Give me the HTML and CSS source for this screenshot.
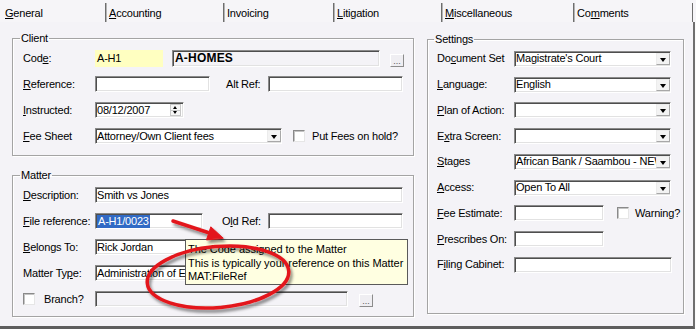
FILE: index.html
```html
<!DOCTYPE html>
<html>
<head>
<meta charset="utf-8" />
<title>Matter - General</title>
<link rel="stylesheet" href="styles.css">
</head>

<body>

<div class="tabs">
  <div class="tab active"><u>G</u>eneral</div>
  <div class="tab w-acc"><u>A</u>ccounting</div>
  <div class="tab w-inv">Invoicing</div>
  <div class="tab w-lit"><u>L</u>itigation</div>
  <div class="tab w-misc"><u>M</u>iscellaneous</div>
  <div class="tab w-com last">Co<u>m</u>ments</div>
</div>

<div class="panel">

  <div class="col-left">

    <fieldset class="group client">
      <legend>Client</legend>

      <div class="row">
        <span class="lbl">Cod<u>e</u>:</span>
        <span class="field yellow w-code">A-H1</span>
        <span class="field readonly bold w-name">A-HOMES</span>
        <span class="dots">...</span>
      </div>

      <div class="row">
        <span class="lbl"><u>R</u>eference:</span>
        <span class="field w-ref"></span>
        <span class="lbl2 alt">Alt Ref:</span>
        <span class="field w-alt"></span>
      </div>

      <div class="row">
        <span class="lbl"><u>I</u>nstructed:</span>
        <span class="field w-date">08/12/2007<span class="spin"><i class="up"></i><i class="dn"></i></span></span>
      </div>

      <div class="row">
        <span class="lbl"><u>F</u>ee Sheet</span>
        <span class="field select w-fee"><span class="val">Attorney/Own Client fees</span><span class="drop"></span></span>
        <span class="check hold"></span>
        <span class="check-text">Put Fees on hold?</span>
      </div>
    </fieldset>

    <fieldset class="group matter">
      <legend>Matter</legend>

      <div class="row">
        <span class="lbl"><u>D</u>escription:</span>
        <span class="field w-desc">Smith vs Jones</span>
      </div>

      <div class="row">
        <span class="lbl"><u>F</u>ile reference:</span>
        <span class="field w-file"><span class="sel">A-H1/0023</span></span>
        <span class="lbl2 old">O<u>l</u>d Ref:</span>
        <span class="field w-alt"></span>
      </div>

      <div class="row">
        <span class="lbl"><u>B</u>elongs To:</span>
        <span class="field w-belong">Rick Jordan</span>
      </div>

      <div class="row">
        <span class="lbl">Matter Ty<u>p</u>e:</span>
        <span class="field select w-belong"><span class="val">Administration of Estates</span><span class="drop"></span></span>
      </div>

      <div class="row">
        <span class="lbl"><span class="check"></span><span class="branch">Branch?</span></span>
        <span class="field readonly w-branch"></span>
        <span class="dots branch-dots">...</span>
      </div>
    </fieldset>

  </div>

  <fieldset class="group settings">
    <legend>Settings</legend>

    <div class="row">
      <span class="lbl">Do<u>c</u>ument Set</span>
      <span class="field select w-set"><span class="val">Magistrate's Court</span><span class="drop"></span></span>
    </div>
    <div class="row">
      <span class="lbl"><u>L</u>anguage:</span>
      <span class="field select w-set"><span class="val">English</span><span class="drop"></span></span>
    </div>
    <div class="row">
      <span class="lbl"><u>P</u>lan of Action:</span>
      <span class="field select w-set"><span class="val"></span><span class="drop"></span></span>
    </div>
    <div class="row">
      <span class="lbl">E<u>x</u>tra Screen:</span>
      <span class="field select w-set"><span class="val"></span><span class="drop"></span></span>
    </div>
    <div class="row">
      <span class="lbl"><u>S</u>tages</span>
      <span class="field select w-set"><span class="val">African Bank / Saambou - NEW</span><span class="drop"></span></span>
    </div>
    <div class="row">
      <span class="lbl"><u>A</u>ccess:</span>
      <span class="field select w-set"><span class="val">Open To All</span><span class="drop"></span></span>
    </div>
    <div class="row">
      <span class="lbl"><u>F</u>ee Estimate:</span>
      <span class="field w-est"></span>
      <span class="check warn"></span>
      <span class="check-text warn-text">Warning?</span>
    </div>
    <div class="row">
      <span class="lbl"><u>P</u>rescribes On:</span>
      <span class="field w-est"></span>
    </div>
    <div class="row">
      <span class="lbl">F<u>i</u>ling Cabinet:</span>
      <span class="field w-cab"></span>
    </div>
  </fieldset>

</div>

<div class="tooltip">
  The Code assigned to the Matter<br />
  This is typically your reference on this Matter<br />
  MAT:FileRef
</div>

<svg class="marks" width="696" height="329" viewBox="0 0 696 329">
  <defs>
    <filter id="shade" x="-20%" y="-20%" width="140%" height="140%">
      <feDropShadow dx="2" dy="3" stdDeviation="1.6" flood-color="#000" flood-opacity="0.45" />
    </filter>
  </defs>
  <g filter="url(#shade)" fill="none" stroke="#e3171b" stroke-linecap="round">
    <line x1="173" y1="221" x2="208" y2="232.5" stroke-width="3.5" />
    <polygon points="223,238 210.8,226.8 206.6,239.6" fill="#e3171b" stroke-width="1" />
    <ellipse cx="218" cy="277" rx="71" ry="30.5" transform="rotate(-5 218 277)" stroke-width="3.5" />
  </g>
</svg>

</body>
</html>
```

FILE: styles.css
```css
body {
  margin: 0;
  width: 696px;
  height: 329px;
  overflow: hidden;
  position: relative;
  background: #fbfbfb;
  color: #000;
  font: 11px/13px "Liberation Sans", Arial, sans-serif;
  letter-spacing: -0.2px;
}

u { text-decoration: underline; text-underline-offset: 1px; }

/* tab strip */
.tabs { display: flex; height: 22px; background: #f6f5f8; }
.tab {
  box-sizing: border-box;
  margin-top: 3px;
  height: 19px;
  padding: 4px 0 0 3px;
  border-left: 1px solid #6e6e6e;
  box-shadow: inset 1px 0 #b4b4b4;
}
.tab.active { width: 105px; border-left: none; box-shadow: none; padding-left: 5px; }
.w-acc { width: 118px; }
.w-inv { width: 110px; }
.w-lit { width: 108px; }
.w-misc { width: 132px; }
.w-com { width: 120px; }
.tab.last { border-right: 1px solid #6e6e6e; }

/* page */
.panel {
  box-sizing: border-box;
  width: 695px;
  height: 307px;
  padding: 10px 0 0 12px;
  background: #f4f3f7;
  border-right: 2px solid #6f6f6f;
  border-bottom: 3px solid #5e5e5e;
  display: grid;
  grid-template-columns: 402px 257px;
  column-gap: 13px;
  align-items: start;
}

.group {
  margin: 0;
  min-width: 0;
  border: 1px solid #a4a4a4;
  box-shadow: 1px 1px 0 #fff, inset 1px 1px 0 #fff;
  padding: 0 0 6px 10px;
}
.group legend {
  margin-left: -3px;
  padding: 0 1px;
  line-height: 13px;
}
.matter { margin-top: 13px; padding-bottom: 4px; }
.settings { margin-top: 1px; padding: 0 0 35px 9px; }
.settings .row { height: 25.75px; }
.settings .lbl { width: 77px; }

.row { display: flex; align-items: center; height: 26px; }
.lbl { width: 72px; flex: none; white-space: nowrap; display: flex; align-items: center; }
.lbl2 { flex: none; }
.alt { margin-left: 16px; width: 42px; }
.old { margin-left: 19px; width: 46px; }

/* inputs */
.field {
  box-sizing: border-box;
  flex: none;
  height: 16px;
  padding: 0 0 0 1px;
  background: #fff;
  border: 1px solid;
  border-color: #8a8a8a #fff #fff #8a8a8a;
  box-shadow: inset 1px 1px #4e4e4e, inset -1px -1px #e2e2e2;
  display: flex;
  align-items: center;
  white-space: nowrap;
  overflow: hidden;
  position: relative;
}
.field.yellow { background: #ffffc1; border-color: #ffffc1; box-shadow: none; height: 17px; }
.field.readonly { background: #f4f3f7; }
.field.bold { font-weight: bold; font-size: 12px; letter-spacing: 0.2px; padding-left: 2px; height: 17px; }

.w-code { width: 68px; }
.w-name { width: 208px; margin-left: 9px; }
.w-ref { width: 115px; }
.w-alt { width: 135px; }
.w-date { width: 89px; }
.w-fee { width: 187px; }
.w-desc { width: 308px; }
.w-file { width: 108px; }
.w-belong { width: 190px; }
.w-branch { width: 253px; }
.w-set { width: 157px; }
.w-est { width: 90px; }
.w-cab { width: 158px; }

.sel { background: #316ac5; color: #fff; padding: 0 1px; line-height: 13px; }

.select .val { flex: 1; overflow: hidden; }
.drop {
  box-sizing: border-box;
  flex: none;
  width: 14px;
  height: 12px;
  background: #f3f3f3;
  border: 1px solid;
  border-color: #ececec #a8a8a8 #a8a8a8 #ececec;
  position: relative;
}
.drop::after {
  content: "";
  position: absolute;
  left: 3px;
  top: 4px;
  border-left: 3.5px solid transparent;
  border-right: 3.5px solid transparent;
  border-top: 4px solid #000;
}

.spin {
  position: absolute;
  right: 2px;
  top: 1px;
  width: 11px;
  height: 12px;
  border: 1px solid #c8c8c8;
  box-sizing: border-box;
  background: #f6f6f6;
}
.spin i { position: absolute; left: 2px; border-left: 2.5px solid transparent; border-right: 2.5px solid transparent; }
.spin .up { top: 1px; border-bottom: 3px solid #000; }
.spin .dn { top: 6px; border-top: 3px solid #000; }
.spin::after { content: ""; position: absolute; left: 0; right: 0; top: 4.5px; border-top: 1px solid #c8c8c8; }

.dots {
  box-sizing: border-box;
  flex: none;
  width: 14px;
  height: 13px;
  margin: 4px 0 0 10px;
  background: #efeef2;
  border: 1px solid;
  border-color: #fff #8c8c8c #8c8c8c #fff;
  font-size: 9px;
  line-height: 12px;
  letter-spacing: 0;
  text-align: center;
  color: #555;
}
.branch-dots { margin: 2px 0 0 11px; }

.check {
  box-sizing: border-box;
  flex: none;
  width: 12px;
  height: 12px;
  background: #fff;
  border: 1px solid;
  border-color: #8a8a8a #e6e6e6 #e6e6e6 #8a8a8a;
  box-shadow: inset 1px 1px #c4c4c4;
}
.hold { margin-left: 11px; }
.check-text { margin-left: 7px; }
.warn { margin-left: 13px; }
.warn-text { margin-left: 6px; }
.branch { margin-left: 9px; }

/* hint window */
.tooltip {
  position: absolute;
  left: 185px;
  top: 239px;
  box-sizing: border-box;
  width: 223px;
  height: 46px;
  padding: 3px 0 0 2px;
  background: #ffffe1;
  border: 1px solid #5a5a5a;
  line-height: 13.5px;
  letter-spacing: -0.05px;
  white-space: nowrap;
}

.marks { position: absolute; left: 0; top: 0; pointer-events: none; }
```
